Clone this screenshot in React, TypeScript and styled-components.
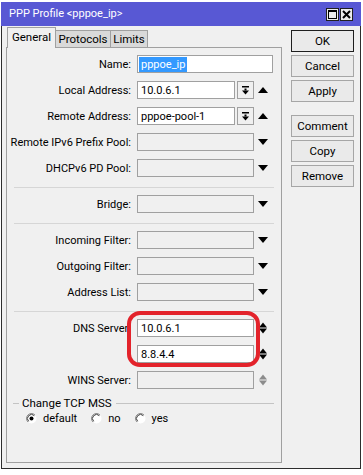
import React from "react";
import styled, { createGlobalStyle } from "styled-components";

const Global = createGlobalStyle`
  html, body { margin: 0; padding: 0; background: #ffffff; }
  body { font-family: Roboto, "Liberation Sans", Arial, sans-serif; font-size: 11px; color: #000; }
  * { box-sizing: border-box; }
`;

const Page = styled.div`
  padding: 2px 0 0 1px;
`;

const Window = styled.div`
  width: 360px;
  height: 467px;
  background: #f0f0f0;
  border: 1px solid #2d2d2d;
  border-top: none;
  display: flex;
  flex-direction: column;
`;

const TitleBar = styled.div`
  height: 24px;
  background: #5858d4;
  display: flex;
  align-items: flex-start;
  margin: 0 -1px;
`;

const TitleText = styled.div`
  color: #ffffff;
  font-size: 11px;
  line-height: 24px;
  padding-left: 8px;
`;

const TitleButtons = styled.div`
  margin-left: auto;
  margin-right: 8px;
  margin-top: 6px;
  display: flex;
  gap: 1px;
`;

const TitleBtn = styled.div`
  width: 13px;
  height: 13px;
  border: 1px solid #202020;
  background: #ececec;
  display: flex;
  align-items: center;
  justify-content: center;
`;

const Content = styled.div`
  flex: 1;
  display: flex;
  padding: 1px 6px 5px 4px;
  min-height: 0;
`;

const LeftCol = styled.div`
  width: 276px;
  display: flex;
  flex-direction: column;
`;

const Tabs = styled.div`
  height: 21px;
  display: flex;
  align-items: flex-end;
  padding-left: 1px;
  margin-bottom: -1px;
  position: relative;
  z-index: 1;
`;

const Tab = styled.div<{ $active?: boolean; $w: number }>`
  width: ${(p) => p.$w}px;
  height: ${(p) => (p.$active ? 21 : 17)}px;
  margin-bottom: ${(p) => (p.$active ? 0 : 1)}px;
  margin-left: -1px;
  background: ${(p) => (p.$active ? "#f0f0f0" : "#d9d9d9")};
  border: 1px solid #a0a0a0;
  border-bottom: none;
  display: flex;
  align-items: center;
  justify-content: center;
  padding-bottom: ${(p) => (p.$active ? 2 : 0)}px;
  font-size: 11.5px;
  &:first-child {
    margin-left: 0;
  }
`;

const Panel = styled.div`
  flex: 1;
  border: 1px solid #a0a0a0;
  padding-top: 7px;
  display: flex;
  flex-direction: column;
  gap: 8px;
`;

const Row = styled.div`
  display: grid;
  grid-template-columns: 124px auto;
  column-gap: 6px;
  align-items: center;
  height: 18px;
`;

const Label = styled.div`
  text-align: right;
  white-space: nowrap;
`;

const FieldArea = styled.div`
  display: flex;
  align-items: center;
  height: 18px;
`;

const Field = styled.div<{ $w: number; $disabled?: boolean; $pad?: number }>`
  width: ${(p) => p.$w}px;
  height: 18px;
  border: 1px solid #a0a0a0;
  background: ${(p) => (p.$disabled ? "#f0f0f0" : "#ffffff")};
  padding-left: ${(p) => p.$pad ?? 3}px;
  display: flex;
  align-items: center;
  white-space: nowrap;
  overflow: hidden;
`;

const Selected = styled.span`
  background: #3399ff;
  color: #ffffff;
  padding: 0 2px;
  line-height: 15px;
`;

const DropBtn = styled.div`
  width: 17px;
  height: 18px;
  margin-left: 2px;
  border: 1px solid #a0a0a0;
  background: #f0f0f0;
  display: flex;
  align-items: center;
  justify-content: center;
`;

const ArrowSlot = styled.div`
  width: 18px;
  height: 18px;
  display: flex;
  align-items: center;
  justify-content: center;
`;

const Separator = styled.div`
  height: 1px;
  margin: 2px 7px -1px 7px;
  background: #d6d6d6;
`;

const DnsBlock = styled.div`
  position: relative;
  display: flex;
  flex-direction: column;
  gap: 8px;
`;

const Ring = styled.div`
  position: absolute;
  left: 120px;
  top: -8px;
  width: 133px;
  height: 56px;
  border: 4px solid #e3232b;
  border-radius: 13px;
  pointer-events: none;
`;

const GroupHeader = styled.div`
  display: flex;
  align-items: center;
  height: 12px;
  margin: 0 7px 0 6px;
  gap: 3px;
`;

const GroupLine = styled.div<{ $grow?: boolean }>`
  height: 1px;
  background: #c4c4c4;
  width: 6px;
  flex: ${(p) => (p.$grow ? 1 : "none")};
`;

const GroupTitle = styled.span`
  padding-right: 1px;
  font-size: 11.5px;
`;

const RadioRow = styled.div`
  display: flex;
  align-items: center;
  height: 12px;
  margin-top: -5px;
  padding-left: 19px;
  gap: 14px;
`;

const RadioItem = styled.label`
  display: flex;
  align-items: center;
  gap: 6px;
`;

const RightCol = styled.div`
  width: 63px;
  margin-left: 9px;
  padding-top: 3px;
  display: flex;
  flex-direction: column;
  gap: 3px;
`;

const Button = styled.div<{ $default?: boolean; $gapBefore?: boolean }>`
  height: 22px;
  border: 1px solid ${(p) => (p.$default ? "#1e1e1e" : "#a6a6a6")};
  background: #eaeaea;
  display: flex;
  align-items: center;
  justify-content: center;
  font-size: 11.5px;
  margin-top: ${(p) => (p.$gapBefore ? 10 : 0)}px;
`;

const TriUp = ({ color = "#000" }: { color?: string }) => (
  <svg width="10" height="6" viewBox="0 0 10 6">
    <polygon points="0,6 10,6 5,0" fill={color} />
  </svg>
);

const TriDown = ({ color = "#000" }: { color?: string }) => (
  <svg width="10" height="6" viewBox="0 0 10 6">
    <polygon points="0,0 10,0 5,6" fill={color} />
  </svg>
);

const UpDown = ({ color = "#000" }: { color?: string }) => (
  <svg width="8" height="12" viewBox="0 0 8 12">
    <polygon points="0,5.5 8,5.5 4,0.5" fill={color} />
    <polygon points="0,6.5 8,6.5 4,11.5" fill={color} />
  </svg>
);

const DropIcon = () => (
  <svg width="7" height="9" viewBox="0 0 7 9">
    <rect x="0" y="0" width="7" height="1.5" fill="#000" />
    <rect x="2.5" y="2.5" width="2" height="2" fill="#000" />
    <polygon points="0,4.5 7,4.5 3.5,8.5" fill="#000" />
  </svg>
);

const Radio = ({ checked }: { checked?: boolean }) => (
  <svg width="11" height="11" viewBox="0 0 11 11">
    <circle cx="5.5" cy="5.5" r="5" fill="#ffffff" />
    <path d="M9.04 1.96 A5 5 0 0 0 1.96 9.04" stroke="#8a8a8a" strokeWidth="1" fill="none" />
    <path d="M8.33 2.67 A4 4 0 0 0 2.67 8.33" stroke="#3c3c3c" strokeWidth="1" fill="none" />
    {checked && <circle cx="5.5" cy="5.5" r="2" fill="#000" />}
  </svg>
);

type Kind = "plain" | "dropUp" | "down" | "updown" | "updownOff";

const FormRow = ({
  label,
  value,
  kind,
  disabled,
}: {
  label: string;
  value?: string;
  kind: Kind;
  disabled?: boolean;
}) => (
  <Row>
    <Label>{label}</Label>
    <FieldArea>
      {kind === "dropUp" ? (
        <>
          <Field $w={98}>{value}</Field>
          <DropBtn>
            <DropIcon />
          </DropBtn>
          <ArrowSlot>
            <TriUp />
          </ArrowSlot>
        </>
      ) : (
        <>
          <Field $w={117} $disabled={disabled}>
            {value}
          </Field>
          <ArrowSlot>
            {kind === "down" && <TriDown />}
            {kind === "updown" && <UpDown />}
            {kind === "updownOff" && <UpDown color="#8c8c8c" />}
          </ArrowSlot>
        </>
      )}
    </FieldArea>
  </Row>
);

export default function App() {
  return (
    <>
      <Global />
      <Page>
        <Window>
          <TitleBar>
            <TitleText>PPP Profile &lt;pppoe_ip&gt;</TitleText>
            <TitleButtons>
              <TitleBtn>
                <svg width="9" height="9" viewBox="0 0 9 9">
                  <rect x="0.5" y="0.5" width="8" height="8" fill="none" stroke="#000" />
                  <rect x="0" y="0" width="9" height="2" fill="#000" />
                </svg>
              </TitleBtn>
              <TitleBtn>
                <svg width="9" height="9" viewBox="0 0 9 9">
                  <path d="M1 1 L8 8 M8 1 L1 8" stroke="#000" strokeWidth="2" />
                </svg>
              </TitleBtn>
            </TitleButtons>
          </TitleBar>
          <Content>
            <LeftCol>
              <Tabs>
                <Tab $active $w={49}>General</Tab>
                <Tab $w={56}>Protocols</Tab>
                <Tab $w={38}>Limits</Tab>
              </Tabs>
              <Panel>
                <Row>
                  <Label>Name:</Label>
                  <FieldArea>
                    <Field $w={136} $pad={1}>
                      <Selected>pppoe_ip</Selected>
                    </Field>
                  </FieldArea>
                </Row>
                <FormRow label="Local Address:" value="10.0.6.1" kind="dropUp" />
                <FormRow label="Remote Address:" value="pppoe-pool-1" kind="dropUp" />
                <FormRow label="Remote IPv6 Prefix Pool:" kind="down" disabled />
                <FormRow label="DHCPv6 PD Pool:" kind="down" disabled />
                <Separator />
                <FormRow label="Bridge:" kind="down" disabled />
                <Separator />
                <FormRow label="Incoming Filter:" kind="down" disabled />
                <FormRow label="Outgoing Filter:" kind="down" disabled />
                <FormRow label="Address List:" kind="down" disabled />
                <Separator />
                <DnsBlock>
                  <FormRow label="DNS Server:" value="10.0.6.1" kind="updown" />
                  <FormRow label="" value="8.8.4.4" kind="updown" />
                  <Ring />
                </DnsBlock>
                <FormRow label="WINS Server:" kind="updownOff" disabled />
                <GroupHeader>
                  <GroupLine />
                  <GroupTitle>Change TCP MSS</GroupTitle>
                  <GroupLine $grow />
                </GroupHeader>
                <RadioRow>
                  <RadioItem>
                    <Radio checked />
                    default
                  </RadioItem>
                  <RadioItem>
                    <Radio />
                    no
                  </RadioItem>
                  <RadioItem>
                    <Radio />
                    yes
                  </RadioItem>
                </RadioRow>
              </Panel>
            </LeftCol>
            <RightCol>
              <Button $default>OK</Button>
              <Button>Cancel</Button>
              <Button>Apply</Button>
              <Button $gapBefore>Comment</Button>
              <Button>Copy</Button>
              <Button>Remove</Button>
            </RightCol>
          </Content>
        </Window>
      </Page>
    </>
  );
}
